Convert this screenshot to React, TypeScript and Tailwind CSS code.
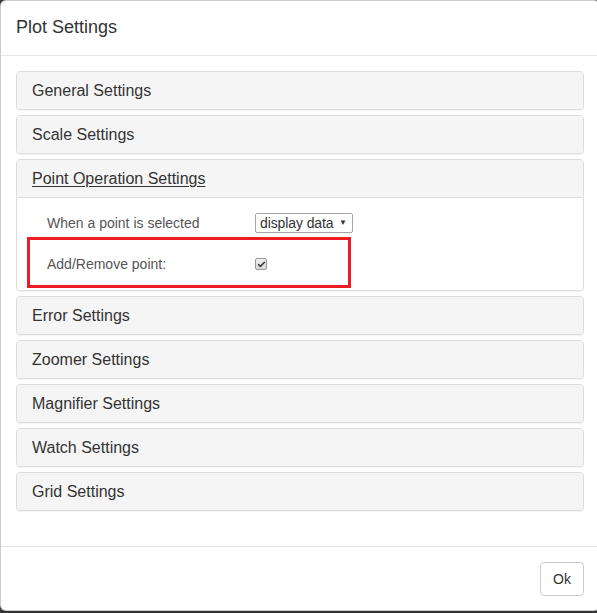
import { Check } from "lucide-react";

const panels = [
  "General Settings",
  "Scale Settings",
  "Point Operation Settings",
  "Error Settings",
  "Zoomer Settings",
  "Magnifier Settings",
  "Watch Settings",
  "Grid Settings",
];

const PanelHeading = ({ title, open }: { title: string; open?: boolean }) => (
  <div
    className={`bg-[#f5f5f5] px-[15px] py-[10px] text-[16px] leading-[17px] text-[#333] ${
      open ? "border-b border-[#ddd]" : ""
    }`}
  >
    <span className={open ? "underline underline-offset-2" : ""}>{title}</span>
  </div>
);

const PointOperationBody = () => (
  <div className="relative pt-[15px] pb-[15px] pl-[30px] text-[14px] text-[#555]">
    <div className="flex h-[20px] items-center">
      <span className="w-[208px]">When a point is selected</span>
      <span className="flex h-[20px] w-[98px] items-center justify-between rounded-[2px] border border-[#a6a6a6] bg-white pl-[4px] pr-[5px] text-[#333]">
        <span className="tracking-[-0.1px]">display data</span>
        <span className="text-[8px] leading-none">▼</span>
      </span>
    </div>
    <div className="mt-[20px] flex h-[22px] items-center">
      <span className="w-[208px]">Add/Remove point:</span>
      <span className="flex h-[12px] w-[12px] items-center justify-center rounded-[2px] border border-[#9a9a9a] bg-gradient-to-b from-[#f0f0f0] to-[#d8d8d8]">
        <Check className="h-[9px] w-[9px] text-[#3b3b3b]" strokeWidth={4} />
      </span>
    </div>
    <div className="absolute left-[10px] top-[39px] h-[51px] w-[324px] border-[3px] border-[#ed1c24]" />
  </div>
);

export default function App() {
  return (
    <div
      className="h-[613px] w-[597px] overflow-hidden bg-[#3c3b30]"
      style={{ fontFamily: '"Liberation Sans", Arial, sans-serif' }}
    >
      <div className="h-[611px] w-[600px] rounded-[6px] border border-black/20 bg-white">
        <div className="h-[55px] border-b border-[#e5e5e5] px-[15px] pt-[14px]">
          <h4 className="text-[18px] leading-[25px] text-[#333]">Plot Settings</h4>
        </div>
        <div className="px-[15px] pt-[15px] pb-[35px]">
          <div className="flex flex-col gap-[5px]">
            {panels.map((title) => {
              const open = title === "Point Operation Settings";
              return (
                <div
                  key={title}
                  className="overflow-hidden rounded-[4px] border border-[#ddd] bg-white shadow-[0_1px_1px_rgba(0,0,0,0.05)]"
                >
                  <PanelHeading title={title} open={open} />
                  {open && <PointOperationBody />}
                </div>
              );
            })}
          </div>
        </div>
        <div className="flex justify-end border-t border-[#e5e5e5] p-[15px]">
          <button className="h-[34px] w-[44px] rounded-[4px] border border-[#ccc] bg-white text-[14px] text-[#333]">
            Ok
          </button>
        </div>
      </div>
      <div className="h-[2px] bg-[#333]" />
    </div>
  );
}
